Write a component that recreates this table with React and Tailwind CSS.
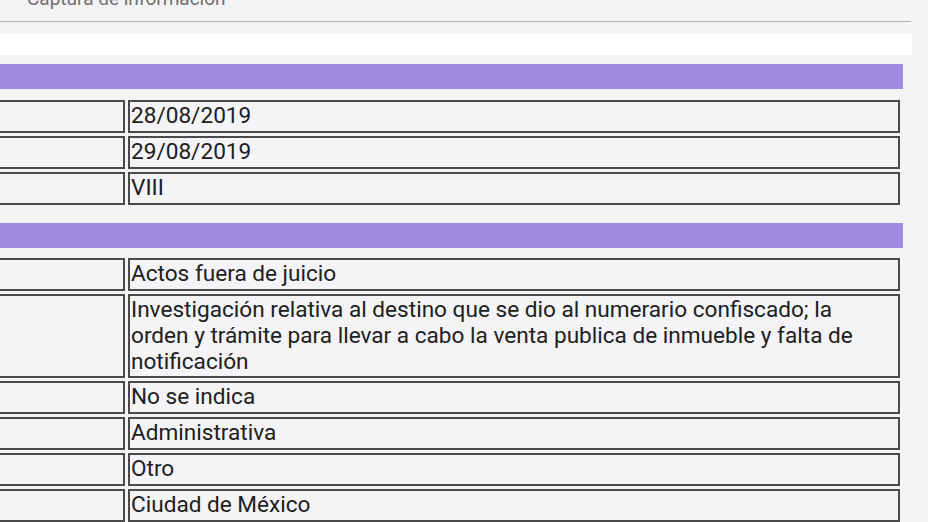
import React from 'react';

const generales = [
  '28/08/2019',
  '29/08/2019',
  'VIII',
];

const detalle = [
  'Actos fuera de juicio',
  'Investigación relativa al destino que se dio al numerario confiscado; la orden y trámite para llevar a cabo la venta publica de inmueble y falta de notificación',
  'No se indica',
  'Administrativa',
  'Otro',
  'Ciudad de México',
];

const Row = ({ value }) => (
  <div className="flex gap-[3px]">
    <div className="w-[129px] -ml-[4px] shrink-0 border-2 border-[#4a4a4a] bg-[#f4f3f6]" />
    <div className="w-[772px] min-h-[33px] border-2 border-[#4a4a4a] bg-[#f4f3f6] px-px py-[1px] pr-[10px] text-[22.6px] leading-[26px] text-[#202020]">
      {value}
    </div>
  </div>
);

const App = () => {
  return (
    <div
      className="w-[928px] h-[522px] overflow-hidden bg-[#f3f2f5]"
      style={{ fontFamily: 'Roboto, "Noto Sans", sans-serif' }}
    >
      <div className="w-[911px] border-b border-[#b3b3b3] h-[22px] flex items-end">
        <span className="pl-[27px] text-[19px] leading-[19px] text-[#707070] mb-[13px]">
          Captura de información
        </span>
      </div>
      <div className="mt-[12px] w-[912px] h-[21px] bg-white" />

      <div className="mt-[9px] w-[903px] h-[25px] bg-[#9d8be2]" />
      <div className="mt-[11px] flex flex-col gap-[3px]">
        {generales.map((v) => (
          <Row key={v} value={v} />
        ))}
      </div>

      <div className="mt-[18px] w-[903px] h-[25px] bg-[#9d8be2]" />
      <div className="mt-[10px] flex flex-col gap-[3px]">
        {detalle.map((v) => (
          <Row key={v} value={v} />
        ))}
      </div>
    </div>
  );
};

export default App;
